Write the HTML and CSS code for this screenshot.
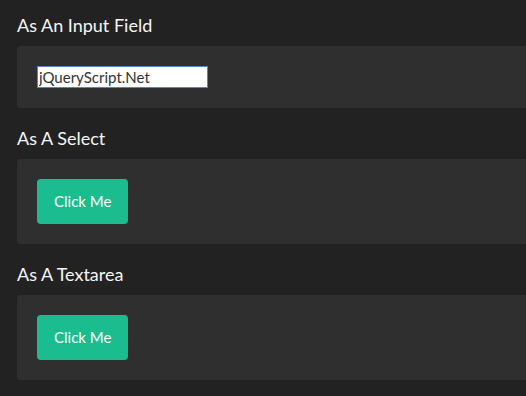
FILE: index.html
```html
<!DOCTYPE html>
<html lang="en">
<head>
  <meta charset="UTF-8">
  <title>Editable Demo</title>
  <link rel="stylesheet" href="styles.css">
</head>
<body>
  <div class="wrap">
    <h2>As An Input Field</h2>
    <div class="panel">
      <input type="text" class="field" value="jQueryScript.Net">
    </div>

    <h2>As A Select</h2>
    <div class="panel">
      <button type="button" class="btn">Click Me</button>
    </div>

    <h2>As A Textarea</h2>
    <div class="panel">
      <button type="button" class="btn">Click Me</button>
    </div>
  </div>
</body>
</html>
```

FILE: styles.css
```css
body {
  margin: 0;
  background-color: #222222;
  font-family: Lato, 'Open Sans', sans-serif;
  color: #fff;
  overflow: hidden;
}

.wrap {
  padding: 14px 0 0 17px;
}

h2 {
  margin: 0 0 10px;
  font-size: 18px;
  line-height: 22px;
  font-weight: 400;
  color: #f6f6f6;
}

.panel {
  background: #2f2f2f;
  border-radius: 3px 0 0 3px;
  padding: 20px;
  margin-bottom: 19px;
  display: flex;
}

.field {
  width: 171px;
  height: 22px;
  box-sizing: border-box;
  margin: 0;
  padding: 0 0 0 1px;
  border: 1px solid #5a80c8;
  background: #fff;
  font-family: Lato, sans-serif;
  font-size: 15px;
  color: #333;
  outline: none;
}

.btn {
  background-color: #1bbc8d;
  color: #fff;
  border: none;
  border-radius: 4px;
  padding: 12px 17px;
  font-family: Lato, sans-serif;
  font-size: 15px;
  line-height: 21px;
  cursor: pointer;
}
```
